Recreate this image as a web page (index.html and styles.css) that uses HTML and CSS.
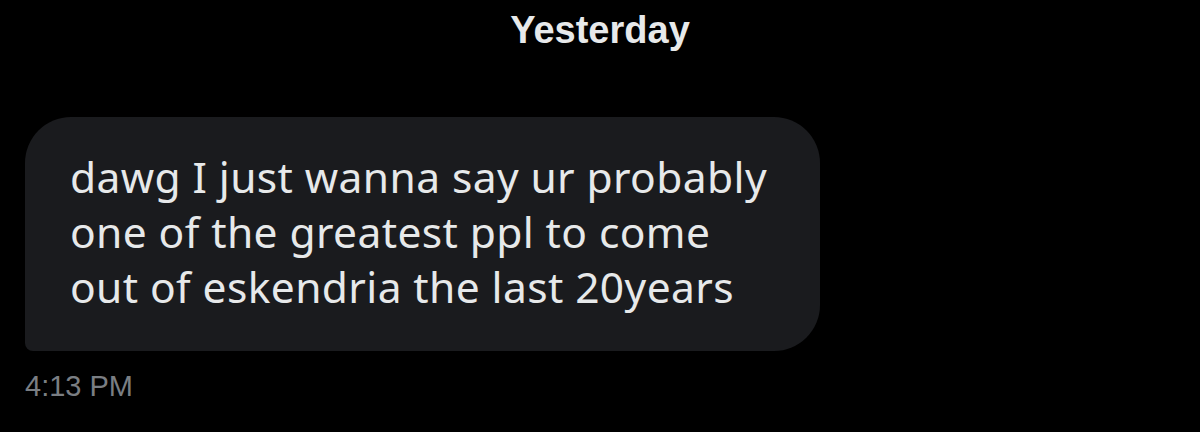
FILE: index.html
```html
<!DOCTYPE html>
<html>
<head>
<meta charset="utf-8">
<link rel="stylesheet" href="styles.css">
</head>
<body>
<div class="page">
  <div class="day">Yesterday</div>
  <div class="row">
    <div class="bubble">dawg I just wanna say ur probably<br>one of the greatest ppl to come<br>out of eskendria the last 20years</div>
  </div>
  <div class="time">4:13 PM</div>
</div>
</body>
</html>
```
FILE: styles.css
```css
html, body {
  margin: 0;
  padding: 0;
  background: #000;
  width: 1200px;
  height: 432px;
  overflow: hidden;
}
.page {
  display: flex;
  flex-direction: column;
  padding: 0 0 0 25px;
}
.day {
  align-self: center;
  margin-left: -25px;
  margin-top: 8px;
  font-family: "Liberation Sans", Arial, sans-serif;
  font-weight: bold;
  font-size: 38px;
  line-height: 44px;
  color: #e7e9ea;
  width: 1200px;
  text-align: center;
}
.row {
  display: flex;
  margin-top: 65px;
}
.bubble {
  background: #1a1b1e;
  border-radius: 46px 46px 46px 8px;
  width: 795px;
  box-sizing: border-box;
  padding: 32px 0 37px 45px;
  font-family: "Noto Sans", "Open Sans", sans-serif;
  font-weight: 400;
  font-size: 42.5px;
  line-height: 55px;
  letter-spacing: 0.4px;
  color: #e7e9ea;
}
.time {
  margin-top: 18px;
  font-family: "Liberation Sans", Arial, sans-serif;
  font-size: 29px;
  line-height: 34px;
  color: #7a7e83;
}
```
